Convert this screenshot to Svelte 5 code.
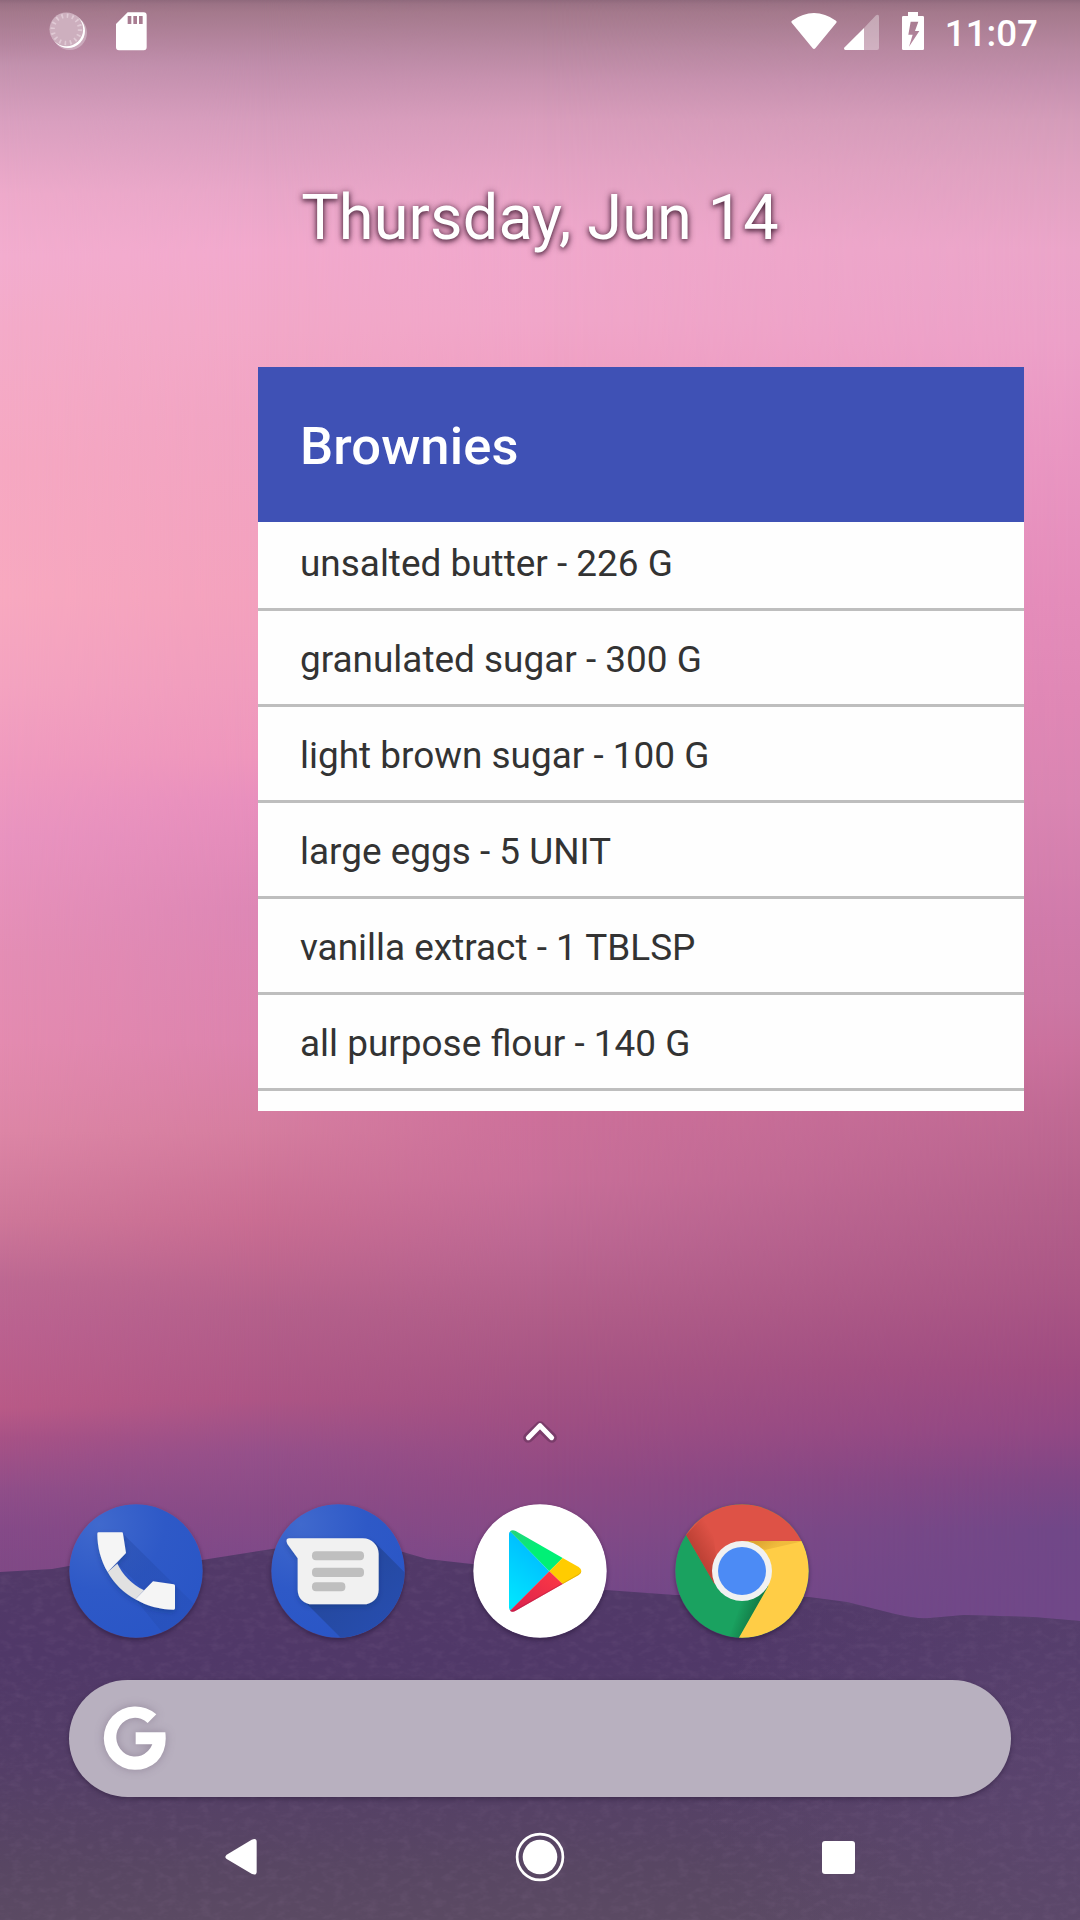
<script>
  const recipe = 'Brownies';
  const ingredients = [
    'unsalted butter - 226 G',
    'granulated sugar - 300 G',
    'light brown sugar - 100 G',
    'large eggs - 5 UNIT',
    'vanilla extract - 1 TBLSP',
    'all purpose flour - 140 G'
  ];
</script>

<div class="screen">
  <div class="wallpaper" aria-hidden="true">
    <div class="sky left"></div>
    <div class="sky quarter"></div>
    <div class="sky middle"></div>
    <div class="sky right"></div>
    <svg class="hills" width="1080" height="1920" viewBox="0 0 1080 1920">
      <defs>
        <linearGradient id="hill" x1="0" y1="1545" x2="0" y2="1920" gradientUnits="userSpaceOnUse">
          <stop offset="0" stop-color="#523968" />
          <stop offset=".3" stop-color="#503868" />
          <stop offset=".6" stop-color="#543e67" />
          <stop offset=".85" stop-color="#584663" />
          <stop offset="1" stop-color="#5b4a63" />
        </linearGradient>
        <radialGradient id="glow" cx="1080" cy="1800" r="380" gradientUnits="userSpaceOnUse">
          <stop offset="0" stop-color="#5d4671" stop-opacity=".7" />
          <stop offset="1" stop-color="#5d4671" stop-opacity="0" />
        </radialGradient>
        <filter id="grain" x="0" y="0" width="100%" height="100%">
          <feTurbulence type="fractalNoise" baseFrequency=".09 .16" numOctaves="3" seed="4" />
          <feColorMatrix values="0 0 0 0 .42  0 0 0 0 .28  0 0 0 0 .46  1.6 0 0 0 -.72" />
          <feComposite in2="SourceGraphic" operator="in" />
        </filter>
        <path id="ridge" d="M0 1572 52 1569 69 1566 202 1560 272 1549Q310 1543 340 1543T403 1552L427 1559 472 1564Q510 1568 545 1579T606 1590L675 1595Q740 1596 809 1597L847 1602 895 1614Q915 1619 930 1618L964 1615 1033 1617 1080 1621V1920H0Z" />
      </defs>
      <use href="#ridge" fill="url(#hill)" />
      <use href="#ridge" fill="url(#glow)" />
      <use href="#ridge" filter="url(#grain)" opacity=".13" />
    </svg>
  </div>

  <header class="status">
    <div class="group">
      <svg class="sync" width="40" height="40" viewBox="144 33 120 120">
        <circle cx="209" cy="98" r="52" fill="#fff" opacity=".3" />
        <circle cx="204" cy="93" r="51" fill="#fff" />
        <circle cx="199" cy="88" r="50.5" fill="#cdafbe" />
        <circle cx="199" cy="88" r="41" fill="none" stroke="#e0cad5" stroke-width="13" stroke-dasharray="5 11.1" />
      </svg>
      <svg width="33" height="40" viewBox="345 33 99 120">
        <path fill="#fff" fill-rule="evenodd" d="M383 37H431Q440 37 440 46V142Q440 151 431 151H357Q348 151 348 142V72ZM383 48V72H394V48ZM400 48V72H411V48ZM417 48V72H428V48Z" />
      </svg>
    </div>
    <div class="group right-side">
      <svg class="wifi" width="46" height="40" viewBox="93 33 138 120">
        <path fill="#fff" d="M96 62Q162 16 228 62Q231 64 229 68L166 145Q162 149 158 145L95 68Q93 64 96 62Z" />
      </svg>
      <svg class="signal" width="37" height="40" viewBox="249 33 111 120">
        <path fill="#fff" opacity=".35" d="M312 84 348 46Q357 41 357 50V144Q357 150 351 150H312Z" />
        <path fill="#fff" d="M312 84V150H256Q249 148 254 142Z" />
      </svg>
      <svg class="battery" width="24" height="40" viewBox="423 33 72 120">
        <path fill="#fff" fill-rule="evenodd" d="M444 36H474V48H488Q492 48 492 52V146Q492 150 488 150H430Q426 150 426 146V52Q426 48 430 48H444ZM452 65 445 104H458L447 140 478 93H465L475 65Z" />
      </svg>
      <span class="clock">11:07</span>
    </div>
  </header>

  <main class="home">
    <div class="date">Thursday, Jun 14</div>

    <section class="widget">
      <h1>{recipe}</h1>
      <ul>
        {#each ingredients as item}
          <li>{item}</li>
        {/each}
      </ul>
    </section>

    <svg class="chevron" width="36" height="26" viewBox="216 57 108 78">
      <path d="M235 113 270 79 305 113" fill="none" stroke="#6c355f" stroke-opacity=".7" stroke-width="31" stroke-linecap="round" stroke-linejoin="round" />
      <path d="M235 113 270 77 305 113" fill="none" stroke="#fff" stroke-width="15" stroke-linecap="round" stroke-linejoin="round" />
    </svg>

    <nav class="dock">
      <svg class="app" width="134" height="134" viewBox="57 71 402 402" role="img" aria-label="Phone">
        <defs>
          <radialGradient id="blue" cx=".22" cy=".15" r=".9">
            <stop offset="0" stop-color="#4069cd" />
            <stop offset=".55" stop-color="#2e59c7" />
            <stop offset="1" stop-color="#2a56c6" />
          </radialGradient>
          <linearGradient id="cast" x1="0" y1="0" x2="1" y2="1">
            <stop offset="0" stop-color="#20429a" stop-opacity=".35" />
            <stop offset="1" stop-color="#20429a" stop-opacity=".12" />
          </linearGradient>
          <clipPath id="phone-disc"><circle cx="258" cy="272" r="200" /></clipPath>
          <filter id="lift" x="-20%" y="-20%" width="140%" height="150%">
            <feDropShadow dx="0" dy="7" stdDeviation="8" flood-color="#10275f" flood-opacity=".3" />
          </filter>
        </defs>
        <circle cx="258" cy="272" r="200" fill="url(#blue)" />
        <g clip-path="url(#phone-disc)">
          <path fill="url(#cast)" d="M219 160 460 398 350 473 256 357 282 330 202 250 227 218Z" />
        </g>
        <g filter="url(#lift)">
          <path fill="#e1e1e1" d="M173 275 202 250C218 283 246 312 282 330L256 357C222 338 192 310 173 275Z" />
          <path fill="#f5f5f5" d="M142 160Q142 156 146 156H215Q219 156 219 160L228 218 173 275C152 240 142 200 142 160ZM256 357 309 303 371 312Q375 313 375 316V384Q375 388 371 388C330 388 290 377 256 357Z" />
        </g>
      </svg>

      <svg class="app" width="134" height="134" viewBox="663 71 402 402" role="img" aria-label="Messages">
        <defs>
          <clipPath id="msg-disc"><circle cx="864" cy="272" r="200" /></clipPath>
          <linearGradient id="cast2" x1="0" y1="0" x2="1" y2="1">
            <stop offset="0" stop-color="#234593" />
            <stop offset="1" stop-color="#2850b8" />
          </linearGradient>
        </defs>
        <circle cx="864" cy="272" r="200" fill="url(#blue)" />
        <g clip-path="url(#msg-disc)">
          <path fill="url(#cast2)" d="M974 186 1100 312V520H920L756 356Z" />
        </g>
        <path filter="url(#lift)" fill="#f1f1f1" d="M717 174H938C966 174 986 196 986 220V328C986 354 966 372 940 372H788C762 372 743 354 743 328V234L712 191Q705 175 717 174Z" />
        <g fill="#bfbfbf">
          <rect x="786" y="213" width="156" height="27" rx="12" />
          <rect x="786" y="262" width="156" height="28" rx="12" />
          <rect x="786" y="306" width="100" height="27" rx="12" />
        </g>
      </svg>

      <svg class="app" width="134" height="134" viewBox="69 312 402 402" role="img" aria-label="Play Store">
        <defs>
          <linearGradient id="cyan" x1=".7" y1="0" x2=".3" y2="1">
            <stop offset="0" stop-color="#00b4ff" />
            <stop offset="1" stop-color="#00e5ff" />
          </linearGradient>
          <linearGradient id="red" x1="1" y1="0" x2="0" y2="1">
            <stop offset="0" stop-color="#ff3a44" />
            <stop offset="1" stop-color="#d8204f" />
          </linearGradient>
          <linearGradient id="green" x1="0" y1="0" x2="1" y2="1">
            <stop offset="0" stop-color="#26d17c" />
            <stop offset=".5" stop-color="#00f076" />
          </linearGradient>
        </defs>
        <circle cx="270" cy="513" r="200" fill="#fff" />
        <path fill="url(#cyan)" d="M181 394 298 514 181 632Q177 629 177 622V402Q177 397 181 394Z" />
        <path fill="url(#green)" d="M180 394Q187 388 197 393L338 474 298 514Z" />
        <path fill="#ffcc00" d="M338 474 386 501Q402 513 386 525L338 552 298 514Z" />
        <path fill="url(#red)" d="M298 514 338 552 197 632Q187 638 180 632Z" />
        <path fill="#b81e45" opacity=".55" d="M338 549V552L197 632Q187 638 180 632L194 629Z" />
        <path fill="#d9a400" opacity=".7" d="M338 549 386 522 394 514Q394 520 386 525L338 552Z" />
      </svg>

      <svg class="app" width="134" height="134" viewBox="675 312 402 402" role="img" aria-label="Chrome">
        <defs>
          <clipPath id="chrome-disc"><circle cx="876" cy="513" r="200" /></clipPath>
          <linearGradient id="shade-red" x1="735" y1="460" x2="800" y2="422" gradientUnits="userSpaceOnUse">
            <stop offset="0" stop-color="#a33428" stop-opacity=".6" />
            <stop offset="1" stop-color="#a33428" stop-opacity="0" />
          </linearGradient>
          <linearGradient id="shade-green" x1="916" y1="640" x2="866" y2="622" gradientUnits="userSpaceOnUse">
            <stop offset="0" stop-color="#0f6b3c" stop-opacity=".7" />
            <stop offset="1" stop-color="#0f6b3c" stop-opacity="0" />
          </linearGradient>
          <linearGradient id="shade-yellow" x1="930" y1="423" x2="950" y2="455" gradientUnits="userSpaceOnUse">
            <stop offset="0" stop-color="#d39a2c" stop-opacity=".75" />
            <stop offset="1" stop-color="#d39a2c" stop-opacity=".35" />
          </linearGradient>
        </defs>
        <g clip-path="url(#chrome-disc)">
          <rect x="675" y="312" width="402" height="402" fill="#1aa260" />
          <path fill="url(#shade-green)" d="M955 558 867 714H836L876 600Z" />
          <path fill="#ffcd46" d="M876 423H1080V720H863L955 558Z" />
          <path fill="url(#shade-yellow)" d="M876 423H1060L945 450Z" />
          <path fill="#de5246" d="M708 405 793 551 876 513V423H1080V300H650Z" />
          <path fill="url(#shade-red)" d="M708 405 793 551 800 480 780 330Z" />
        </g>
        <circle cx="876" cy="513" r="90" fill="#f1f1f1" />
        <circle cx="876" cy="513" r="72" fill="#4c8bf5" />
      </svg>
    </nav>

    <div class="search">
      <svg width="64" height="66" viewBox="159 134 192 198" role="img" aria-label="Google">
        <path fill="#fff" d="M319 162 293 188A56 58 0 1 0 307 252H257V216H346Q353 271 320 304A95 95 0 1 1 319 162Z" />
      </svg>
    </div>
  </main>

  <footer class="nav">
    <svg width="34" height="38" viewBox="525 535 102 114">
      <path fill="#fff" d="M530 585 605 540Q620 534 620 546V636Q620 648 606 643L530 598Q522 592 530 585Z" />
    </svg>
    <svg class="home-key" width="50" height="50" viewBox="0 0 50 50">
      <circle cx="25" cy="25" r="22.9" fill="none" stroke="#fff" stroke-width="2.7" />
      <circle cx="25" cy="25" r="17.3" fill="#fff" />
    </svg>
    <span class="recents"></span>
  </footer>
</div>

<style>
  :global(body) {
    margin: 0;
  }

  .screen {
    position: relative;
    isolation: isolate;
    display: flex;
    flex-direction: column;
    width: 1080px;
    height: 1920px;
    overflow: hidden;
    font-family: Roboto, 'Liberation Sans', sans-serif;
  }

  svg {
    display: block;
    flex: none;
  }

  /* Wallpaper: vertical gradients cross-faded from left to right */
  .wallpaper,
  .sky,
  .hills {
    position: absolute;
    inset: 0;
  }

  .wallpaper {
    z-index: -1;
  }

  .left {
    background: linear-gradient(
      #8f697c 0, #9b7285 4px, #a4798c 12px, #b686a0 45px, #c392ae 65px, #daa0c0 122px, #eeaacb 194px,
      #f3adcf 256px, #f4abc9 328px, #f6a8c2 462px, #f8a9c0 596px, #f4a3c0 685px, #ef99bf 774px,
      #e994c0 837px, #e48eb5 953px, #e48bb0 1042px, #dd86a6 1131px, #ce7799 1220px, #bd6892 1283px,
      #bb6290 1328px, #b95a87 1408px, #a85286 1438px, #904e89 1490px, #854a88 1530px, #7f4985 1580px
    );
  }

  .quarter {
    background: linear-gradient(
      #8f697c 0, #9b7285 4px, #a4798c 12px, #b686a0 45px, #c08dab 65px, #d79dbd 122px, #e8a6c8 190px,
      #f2a9cd 250px, #f2a8c8 330px, #f1a4c3 420px, #f3a1bd 596px, #f09cbd 685px, #ee96bc 756px,
      #e88fbd 801px, #dd87b5 908px, #dc83ad 1042px, #d57d9f 1131px, #c96d92 1220px, #b4608b 1310px,
      #ad5585 1399px, #95508a 1453px, #884b87 1510px, #7d4988 1560px, #774887 1600px
    );
    mask-image: linear-gradient(to right, transparent 0, #000 24%);
  }

  .middle {
    background: linear-gradient(
      #8f697c 0, #9b7285 4px, #a4798c 12px, #b888a1 50px, #c892af 80px, #d99dbc 120px, #e4a3c4 170px,
      #f0a8cc 240px, #f1a6c9 320px, #ef9cc0 420px, #e890b8 620px, #dc84ac 820px, #d2779f 1000px,
      #cd709a 1110px, #c86f99 1180px, #bd6893 1240px, #b15e89 1310px, #a75584 1370px, #9f4f83 1420px,
      #904a84 1480px, #854a86 1530px, #7a4988 1570px, #714787 1620px
    );
    mask-image: linear-gradient(to right, transparent 24%, #000 50%);
  }

  .right {
    background: linear-gradient(
      #8f697c 0, #9b7285 4px, #a4798c 12px, #b888a1 50px, #c590ae 80px, #d49cb9 120px, #dfa1c0 170px,
      #eba5c9 250px, #eca0c8 340px, #e996c2 450px, #e48cba 600px, #df87b5 710px, #d985b2 800px,
      #d07bab 920px, #cc77a4 1000px, #ca719d 1050px, #c06a94 1110px, #b4608b 1200px, #aa5685 1290px,
      #9e4b81 1370px, #924884 1430px, #7e4685 1480px, #704788 1530px, #704888 1620px
    );
    mask-image: linear-gradient(to right, transparent 50%, #000 100%);
  }

  .status {
    display: flex;
    flex: none;
    justify-content: space-between;
    height: 63px;
    box-sizing: border-box;
    padding: 11px 42px 0 48px;
  }

  .group {
    display: flex;
    gap: 27px;
  }

  .right-side {
    gap: 0;
  }

  .signal {
    margin-left: 6px;
  }

  .battery {
    margin: 0 20px 0 21px;
  }

  .clock {
    color: #fff;
    font-size: 36.75px;
    font-weight: 500;
    line-height: 46px;
  }

  .home {
    display: flex;
    flex: 1;
    flex-direction: column;
  }

  .date {
    margin-top: 118px;
    color: #fff;
    font-size: 63px;
    letter-spacing: 0.14px;
    line-height: 74px;
    text-align: center;
    text-shadow: 0 1px 7px rgb(50 15 38 / 0.85), 0 2px 4px rgb(50 15 38 / 0.5);
  }

  .widget {
    width: 766px;
    height: 744px;
    margin: 112px 0 0 258px;
    overflow: hidden;
    background: #fefefe;
  }

  h1 {
    height: 155px;
    margin: 0;
    padding: 2px 42px 0;
    box-sizing: border-box;
    background: #3f51b5;
    color: #fff;
    font-size: 52.5px;
    font-weight: 500;
    letter-spacing: 0.14px;
    line-height: 155px;
    position: relative;
  }

  ul {
    margin: -7px 0 0;
    padding: 0;
    list-style: none;
  }

  li {
    height: 93px;
    padding-left: 42px;
    border-bottom: 3px solid #bebebe;
    color: #333;
    font-size: 36.93px;
    line-height: 97px;
  }

  .chevron {
    margin: 308px auto 0;
  }

  .dock {
    display: flex;
    gap: 68px;
    margin: 59px 0 0 69px;
  }

  .app {
    border-radius: 50%;
    box-shadow: 0 2px 4px rgb(20 8 35 / 0.4);
  }

  .search {
    display: flex;
    align-items: center;
    width: 942px;
    height: 117px;
    box-sizing: border-box;
    margin: 42px 0 0 69px;
    padding: 0 0 2px 34px;
    border-radius: 59px;
    background: #b8b0bf;
    box-shadow: 0 2px 5px rgb(25 12 40 / 0.4);
  }

  .search svg {
    filter: drop-shadow(0 0 5px rgb(70 50 80 / 0.3));
  }

  .nav {
    display: flex;
    flex: none;
    align-items: center;
    justify-content: space-between;
    height: 126px;
    box-sizing: border-box;
    padding: 0 225px 6px;
  }

  .home-key {
    margin-right: 2px;
  }

  .recents {
    width: 33px;
    height: 33px;
    border-radius: 3px;
    background: #fff;
  }
</style>
